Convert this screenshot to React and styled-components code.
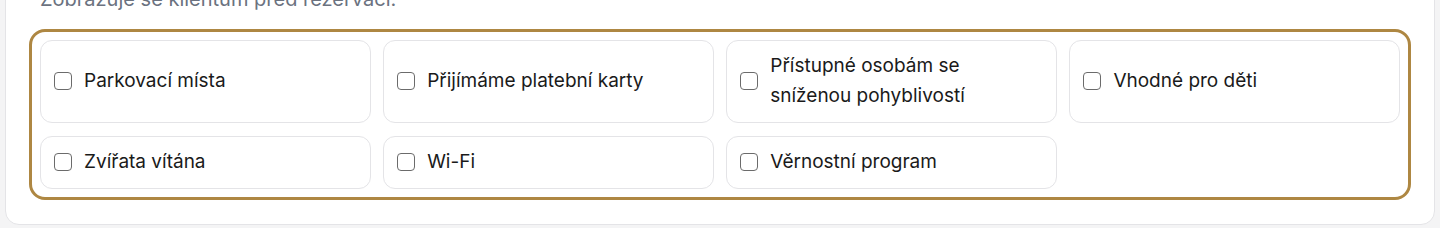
import styled, { createGlobalStyle } from "styled-components";

const Global = createGlobalStyle`
  html, body {
    margin: 0;
    padding: 0;
    background: #f4f4f5;
    font-family: Inter, "Noto Sans", sans-serif;
    color: #1f1f1f;
  }
  * { box-sizing: border-box; }
`;

const Page = styled.div`
  padding: 0 5px 0 5px;
  height: 228px;
  overflow: hidden;
`;

const Card = styled.section`
  margin-top: -36px;
  background: #fff;
  border: 1px solid #e4e4e7;
  border-radius: 14px;
  padding: 20px 23px 24px;
`;

const Hint = styled.p`
  margin: 0 0 15.5px 11px;
  font-size: 20px;
  line-height: 28px;
  color: #6b7280;
`;

const Picker = styled.div`
  border: 3px solid #ae8742;
  border-radius: 16px;
  padding: 8px;
  display: grid;
  grid-template-columns: repeat(4, 1fr);
  gap: 13px 12.5px;
`;

const Option = styled.label`
  display: flex;
  align-items: center;
  gap: 12px;
  padding: 10.5px 13px;
  border: 1px solid #e4e4e7;
  border-radius: 12px;
  background: #fff;
  cursor: pointer;
`;

const Box = styled.input`
  appearance: none;
  flex: none;
  width: 18px;
  height: 18px;
  margin: 0;
  border: 1.5px solid #6b6b6b;
  border-radius: 4px;
  background: #fff;
`;

const Text = styled.span`
  font-size: 19px;
  line-height: 30px;
  color: #1a1a1a;
`;

const options = [
  "Parkovací místa",
  "Přijímáme platební karty",
  "Přístupné osobám se sníženou pohyblivostí",
  "Vhodné pro děti",
  "Zvířata vítána",
  "Wi-Fi",
  "Věrnostní program",
];

export default function App() {
  return (
    <>
      <Global />
      <Page>
        <Card>
          <Hint>Zobrazuje se klientům před rezervací.</Hint>
          <Picker>
            {options.map((o) => (
              <Option key={o}>
                <Box type="checkbox" />
                <Text>{o}</Text>
              </Option>
            ))}
          </Picker>
        </Card>
      </Page>
    </>
  );
}
